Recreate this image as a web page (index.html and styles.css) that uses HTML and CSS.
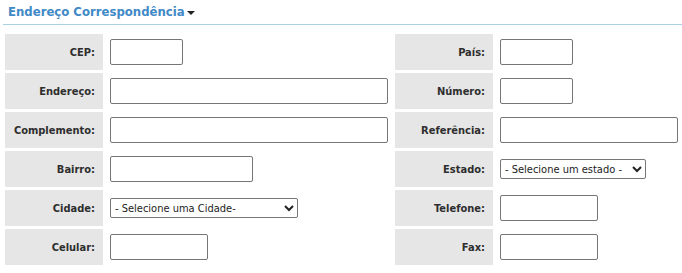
FILE: index.html
```html
<!DOCTYPE html>
<html lang="pt-BR">
<head>
    <meta charset="UTF-8">
    <meta name="viewport" content="width=device-width, initial-scale=1.0">
    <title>Endereço Correspondência</title>
    <link rel="stylesheet" href="styles.css">
</head>
<body>

    <div class="section">
        <!-- Section title -->
        <h2 class="section-title">Endereço Correspondência <span class="caret"></span></h2>

        <table class="form-table">
            <tr>
                <td class="label">CEP:</td>
                <td class="field"><input type="text" class="w-xs"></td>
                <td class="label">País:</td>
                <td class="field"><input type="text" class="w-xs"></td>
            </tr>
            <tr>
                <td class="label">Endereço:</td>
                <td class="field"><input type="text" class="w-xl"></td>
                <td class="label">Número:</td>
                <td class="field"><input type="text" class="w-xs"></td>
            </tr>
            <tr>
                <td class="label">Complemento:</td>
                <td class="field"><input type="text" class="w-xl"></td>
                <td class="label">Referência:</td>
                <td class="field"><input type="text" class="w-lg"></td>
            </tr>
            <tr>
                <td class="label">Bairro:</td>
                <td class="field"><input type="text" class="w-md"></td>
                <td class="label">Estado:</td>
                <td class="field">
                    <select class="sel-estado">
                        <option>- Selecione um estado -</option>
                    </select>
                </td>
            </tr>
            <tr>
                <td class="label">Cidade:</td>
                <td class="field">
                    <select class="sel-cidade">
                        <option>- Selecione uma Cidade-</option>
                    </select>
                </td>
                <td class="label">Telefone:</td>
                <td class="field"><input type="text" class="w-sm"></td>
            </tr>
            <tr>
                <td class="label">Celular:</td>
                <td class="field"><input type="text" class="w-sm"></td>
                <td class="label">Fax:</td>
                <td class="field"><input type="text" class="w-sm"></td>
            </tr>
        </table>
    </div>

</body>
</html>
```

FILE: styles.css
```css
/* Base */
body {
    font-family: 'DejaVu Sans Condensed', 'DejaVu Sans', sans-serif;
    font-stretch: condensed;
    background-color: #ffffff;
    color: #333333;
    margin: 0;
    padding: 0 0 0 3px;
}

/* Section header */
.section-title {
    font-size: 13px;
    font-weight: bold;
    color: #3f89c7;
    margin: 0;
    padding: 4px 0 5px 5px;
    border-bottom: 1px solid #a9d3e3;
    line-height: 15px;
}

.caret {
    display: inline-block;
    width: 0;
    height: 0;
    border-left: 4px solid transparent;
    border-right: 4px solid transparent;
    border-top: 4px solid #222;
    vertical-align: middle;
    margin-left: -2px;
}

/* Form table */
.form-table {
    border-spacing: 2px 3px;
    margin-top: 6px;
}

.form-table td {
    height: 36px;
    padding: 0;
    vertical-align: middle;
}

.label {
    width: 90px;
    background-color: #e6e6e6;
    text-align: right;
    font-size: 11px;
    font-weight: bold;
    color: #2e2e2e;
    padding-right: 8px !important;
}

.field {
    padding-left: 5px !important;
}

.form-table tr td:nth-child(2) {
    width: 283px;
}

.form-table tr td:nth-child(4) {
    width: 180px;
}

input[type="text"] {
    box-sizing: border-box;
    height: 26px;
    border: 1px solid #767676;
    border-radius: 2px;
    display: block;
    font-family: inherit;
    font-size: 11px;
}

.w-xs { width: 73px; }
.w-sm { width: 98px; }
.w-md { width: 143px; }
.w-lg { width: 178px; }
.w-xl { width: 278px; }

select {
    box-sizing: border-box;
    height: 20px;
    border: 1px solid #767676;
    border-radius: 2px;
    font-family: inherit;
    font-size: 11px;
    color: #222;
    background-color: #fff;
    display: block;
}

.sel-cidade { width: 188px; }
.sel-estado { width: 146px; }
```
